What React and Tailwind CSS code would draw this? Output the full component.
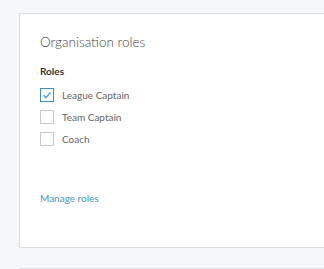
import React from "react";

const roles = [
  { name: "League Captain", checked: true },
  { name: "Team Captain", checked: false },
  { name: "Coach", checked: false },
];

export default function App() {
  return (
    <div className="w-[324px] h-[269px] bg-[#f5f7fa] overflow-hidden pt-[13px] pl-[19px]" style={{ fontFamily: "Lato, 'Open Sans', sans-serif" }}>
      <div className="h-[235px] bg-white border border-r-0 border-[#dadee3] pl-[20px] pt-[20px]">
        <h2 className="text-[13.5px] leading-[16px] text-[#444] font-light">Organisation roles</h2>
        <div className="mt-[15px] text-[10px] leading-[12px] font-bold text-[#333]">Roles</div>
        <div className="mt-[11px] flex flex-col gap-[8px]">
          {roles.map((r) => (
            <label key={r.name} className="flex items-center gap-[8px] h-[14px]">
              <span className={`w-[14px] h-[14px] border flex items-center justify-center bg-white ${r.checked ? "border-[#3d8fc7]" : "border-[#c6c9cd]"}`}>
                {r.checked && (
                  <svg width="10" height="10" viewBox="0 0 10 10">
                    <path d="M1.5 5.2 L4 7.5 L8.5 2.5" fill="none" stroke="#5aa6d8" strokeWidth="1.6" />
                  </svg>
                )}
              </span>
              <span className="text-[10px] leading-[12px] text-[#666]">{r.name}</span>
            </label>
          ))}
        </div>
        <div className="mt-[46px] text-[10px] leading-[12px] text-[#3f97c9]">Manage roles</div>
      </div>
      <div className="mt-[20px] border-t border-[#dadee3]"></div>
    </div>
  );
}
